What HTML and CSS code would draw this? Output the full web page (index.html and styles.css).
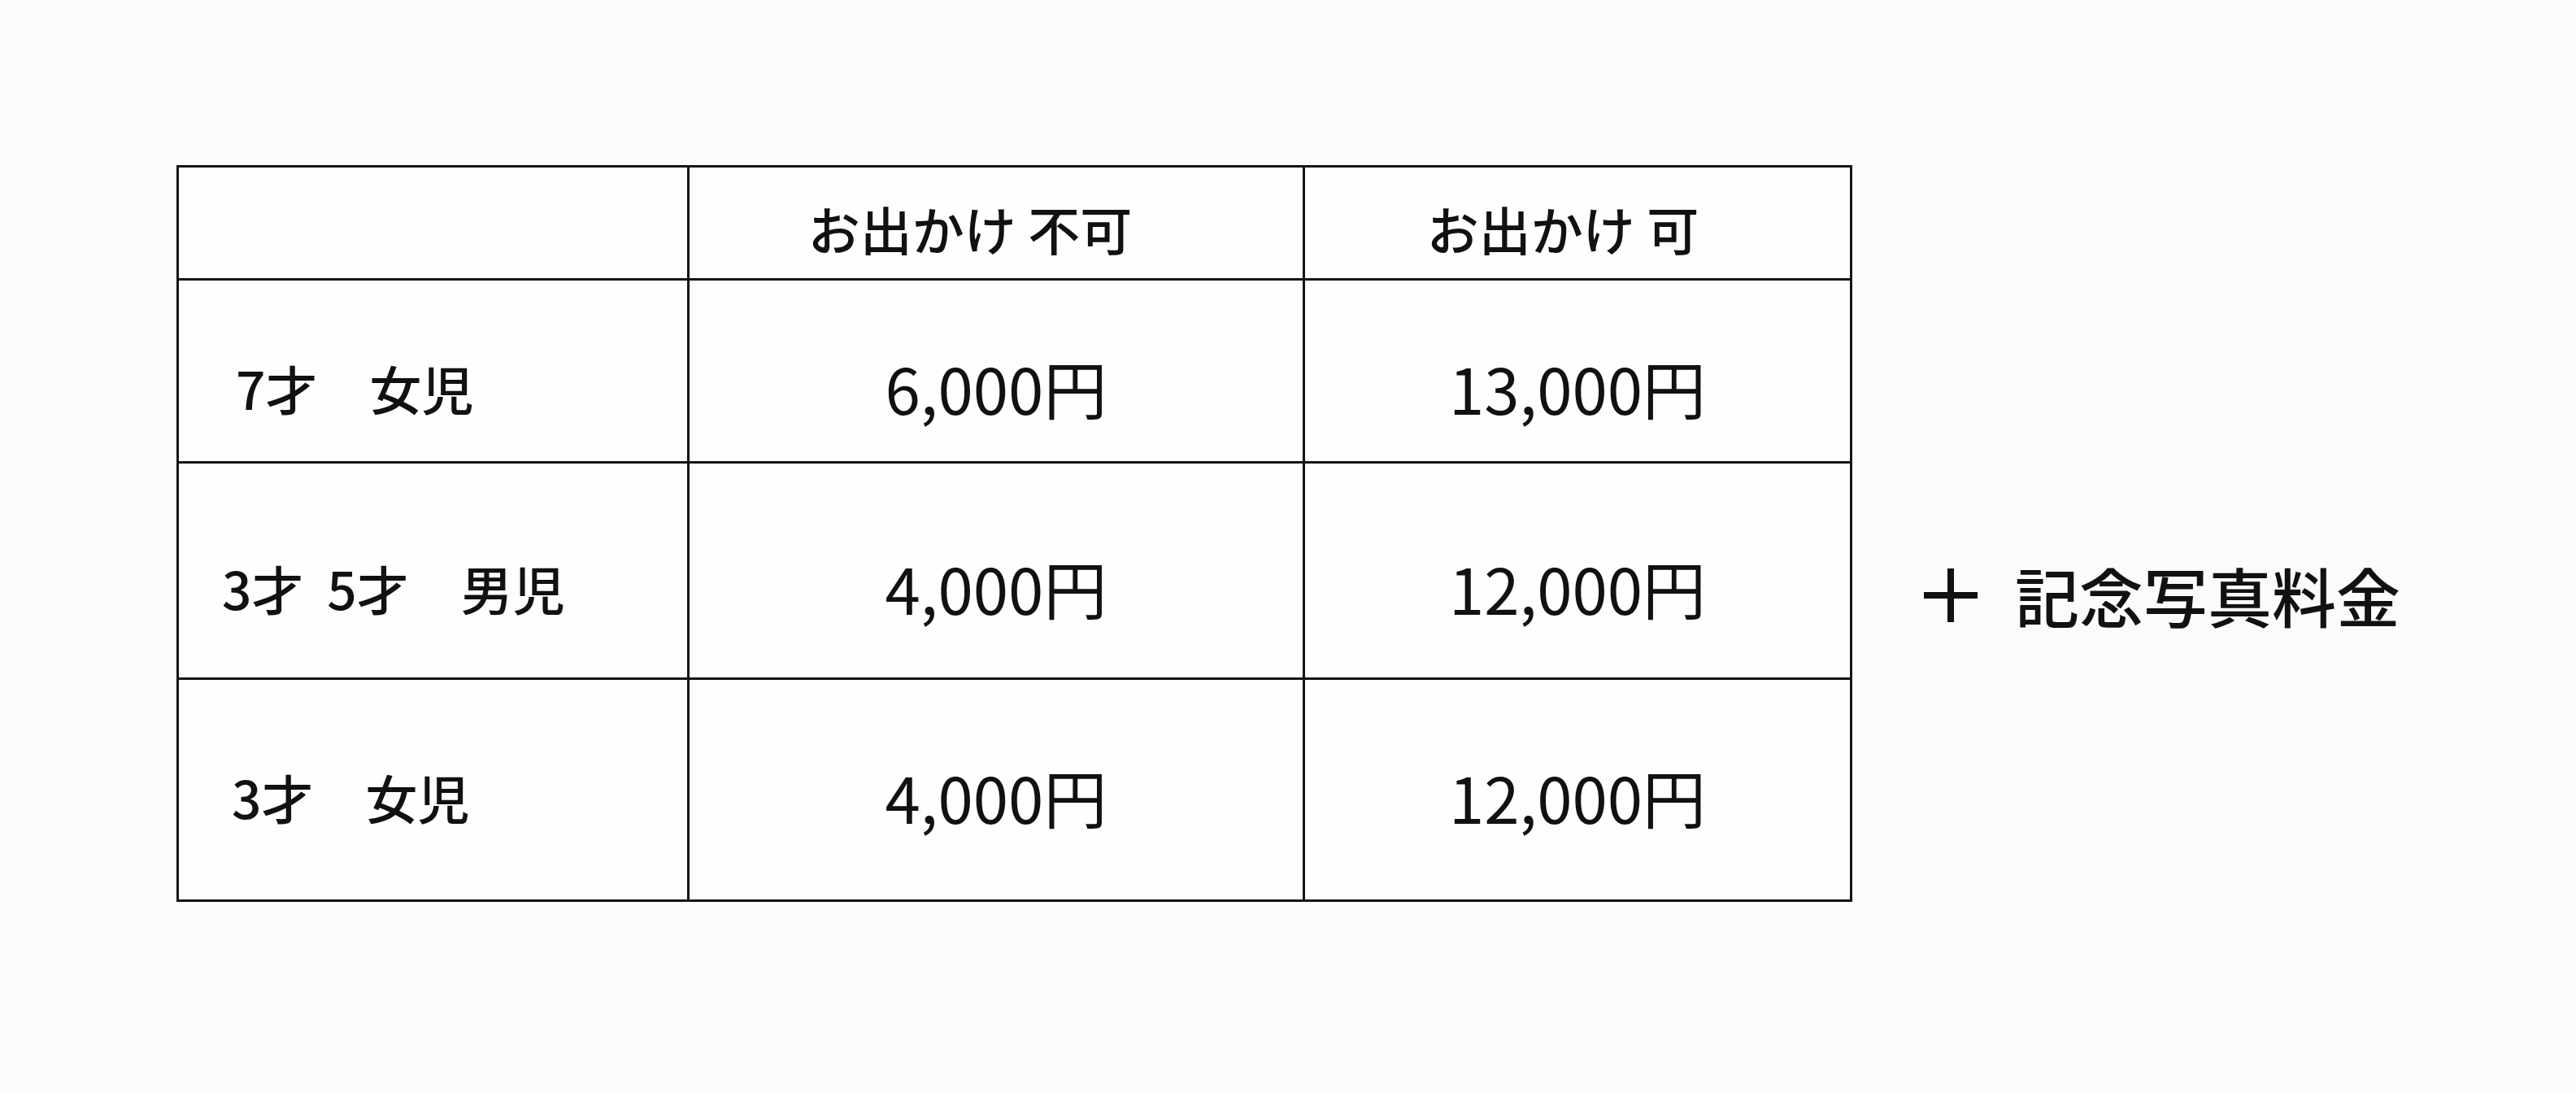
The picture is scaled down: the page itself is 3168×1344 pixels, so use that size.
FILE: index.html
```html
<!DOCTYPE html>
<html lang="ja">
<head>
<meta charset="utf-8">
<title>料金表</title>
<link rel="stylesheet" href="styles.css">
</head>
<body>
<main class="sheet">
  <div class="price-table">
    <div class="cell head"></div>
    <div class="cell head num head-off">お出かけ 不可</div>
    <div class="cell head num head-on">お出かけ 可</div>

    <div class="cell row-a label lbl-a">7才　女児</div>
    <div class="cell row-a num price">6,000円</div>
    <div class="cell row-a num price">13,000円</div>

    <div class="cell row-b label lbl-b">3才  5才　男児</div>
    <div class="cell row-b num price">4,000円</div>
    <div class="cell row-b num price">12,000円</div>

    <div class="cell row-c label lbl-c">3才　女児</div>
    <div class="cell row-c num price">4,000円</div>
    <div class="cell row-c num price">12,000円</div>
  </div>
  <div class="side">
    <span class="plus" aria-label="＋"></span>
    <span class="side-text">記念写真料金</span>
  </div>
</main>
</body>
</html>
```

FILE: styles.css
```css
html, body {
  margin: 0;
  padding: 0;
  background: #fbfbf9;
}

body {
  width: 3168px;
  height: 1344px;
  font-family: "Noto Sans CJK JP", "Noto Sans", sans-serif;
  font-weight: 500;
  color: #111111;
}

.sheet {
  display: flex;
  align-items: flex-start;
  padding: 203px 0 0 217px;
}

.price-table {
  display: grid;
  grid-template-columns: 625px 754px 670px;
  grid-template-rows: 136px 222px 263px 270px;
  gap: 3px;
  padding: 3px;
  background: #151515;
}

.cell {
  background: #fefefe;
  display: flex;
  align-items: center;
  line-height: 1;
  white-space: pre;
}

.head {
  font-size: 64px;
  padding-top: 12px;
}

.num {
  justify-content: center;
}

.head-off {
  padding-right: 64px;
}

.head-on {
  padding-right: 36px;
}

.label {
  font-size: 64px;
}

.price {
  font-size: 78px;
  font-weight: 400;
}

.row-a,
.row-b {
  padding-top: 40px;
}

.row-c {
  padding-top: 16px;
}

.lbl-a {
  padding-left: 70px;
}

.lbl-b {
  padding-left: 53px;
}

.lbl-c {
  padding-left: 65px;
}

.side {
  display: flex;
  align-items: center;
  gap: 46px;
  margin: 489px 0 0 88px;
  line-height: 1;
}

.plus {
  width: 66px;
  height: 66px;
  background:
    linear-gradient(#111111, #111111) center / 8px 100% no-repeat,
    linear-gradient(#111111, #111111) center / 100% 8px no-repeat;
}

.side-text {
  font-size: 79px;
}
```
